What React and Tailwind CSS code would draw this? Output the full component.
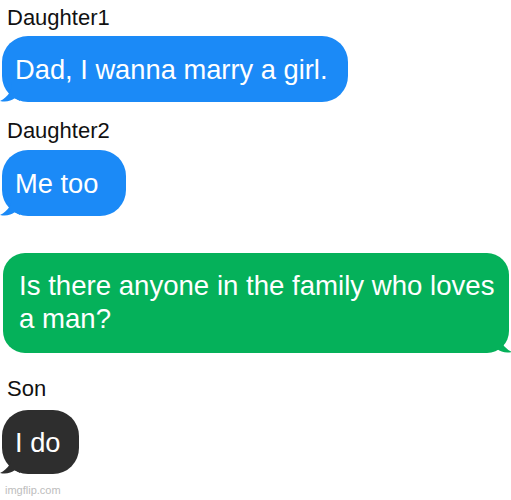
const LeftTail = ({ color }) => (
  <svg
    className="absolute -left-[2px] bottom-0"
    width="20"
    height="20"
    viewBox="0 0 20 20"
  >
    <path
      d="M12 0 C12 9 8 15 0 19 C6 20.5 11 19 15 16 L20 19 L20 0 Z"
      fill={color}
    />
  </svg>
);

const RightTail = ({ color }) => (
  <svg
    className="absolute -right-[3px] bottom-0"
    width="20"
    height="20"
    viewBox="0 0 20 20"
  >
    <path
      d="M8 0 C8 9 12 15 20 19 C14 20.5 9 19 5 16 L0 19 L0 0 Z"
      fill={color}
    />
  </svg>
);

const Label = ({ children, className }) => (
  <p className={`ml-[7px] text-[22px] leading-[28px] text-[#111] ${className}`}>
    {children}
  </p>
);

const App = () => {
  return (
    <div className="h-[500px] w-[511px] overflow-hidden bg-white font-['Liberation_Sans',Arial,sans-serif]">
      <div className="flex flex-col items-start pt-1">
        <Label>Daughter1</Label>
        <div className="relative ml-[2px] mt-1 rounded-[26px] bg-[#1b8af7] pb-[17px] pl-[13px] pr-5 pt-[18px] text-[27.3px] leading-[31px] text-white">
          <LeftTail color="#1b8af7" />
          <span className="relative">Dad, I wanna marry a girl.</span>
        </div>

        <Label className="mt-[15px]">Daughter2</Label>
        <div className="relative ml-[2px] mt-[5px] rounded-[26px] bg-[#1b8af7] pb-[17px] pl-[13px] pr-7 pt-[18px] text-[27.3px] leading-[31px] text-white">
          <LeftTail color="#1b8af7" />
          <span className="relative">Me too</span>
        </div>

        <div className="relative ml-[3px] mt-[37px] w-[506px] rounded-[22px] bg-[#05b15a] pb-[18px] pl-[16px] pr-1 pt-4 text-[27.6px] leading-[33px] text-white">
          <RightTail color="#05b15a" />
          <span className="relative">
            Is there anyone in the family who loves
            <br />
            a man?
          </span>
        </div>

        <Label className="mt-[22px]">Son</Label>
        <div className="relative ml-[2px] mt-[7px] rounded-[26px] bg-[#2e2e2e] pb-4 pl-[13px] pr-[18px] pt-[17px] text-[27.3px] leading-[31px] text-white">
          <LeftTail color="#2e2e2e" />
          <span className="relative">I do</span>
        </div>

        <p className="ml-[5px] mt-[9px] text-[11px] leading-[14px] text-[#bdbdbd]">
          imgflip.com
        </p>
      </div>
    </div>
  );
};

export default App;
